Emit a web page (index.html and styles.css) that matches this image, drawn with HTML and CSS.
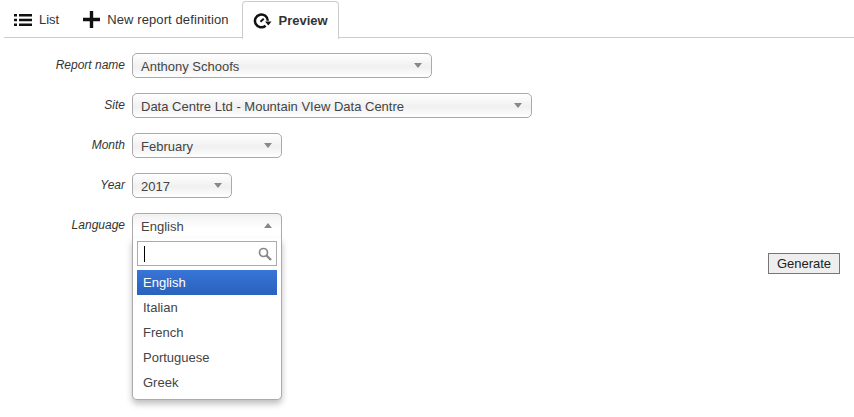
FILE: index.html
```html
<!DOCTYPE html>
<html lang="en">
<head>
    <meta charset="UTF-8">
    <title>Report preview</title>
    <link rel="stylesheet" href="styles.css">
</head>
<body>
    <ul class="tabs">
        <li class="tab">
            <svg class="icon-list" width="18" height="12" viewBox="0 0 18 12"><path d="M0 0h3v2.500H0zM5 0h13v2.500H5zM0 4.750h3v2.500H0zM5 4.750h13v2.500H5zM0 9.500h3V12H0zM5 9.500h13V12H5z" fill="#111"/></svg>
            List
        </li>
        <li class="tab">
            <svg class="icon-plus" width="17" height="17" viewBox="0 0 17 17"><path d="M6.800 0h3.400v6.800H17v3.400h-6.800V17H6.800v-6.800H0V6.800h6.800z" fill="#111"/></svg>
            New report definition
        </li>
        <li class="tab tab-active">
            <svg class="icon-preview" width="19" height="16" viewBox="0 0 19 16"><path d="M12.600 12.700A6.400 6.400 0 1 1 14.800 7.800" fill="none" stroke="#111" stroke-width="2.500"/><path d="M7.400 8.800l3.400-3" fill="none" stroke="#111" stroke-width="2"/><path d="M12 8.500h6.500l-3.200 4z" fill="#111"/></svg>
            Preview
        </li>
    </ul>

    <div class="content">
        <form class="form">
            <div class="row">
                <label class="label">Report name</label>
                <div class="select w300">Anthony Schoofs<span class="arrow"></span></div>
            </div>
            <div class="row">
                <label class="label">Site</label>
                <div class="select w400">Data Centre Ltd - Mountain VIew Data Centre<span class="arrow"></span></div>
            </div>
            <div class="row">
                <label class="label">Month</label>
                <div class="select w150">February<span class="arrow"></span></div>
            </div>
            <div class="row">
                <label class="label">Year</label>
                <div class="select w100">2017<span class="arrow"></span></div>
            </div>
            <div class="row">
                <label class="label">Language</label>
                <div class="select select-open w150">
                    English<span class="arrow arrow-up"></span>
                    <div class="dropdown">
                        <div class="search">
                            <span class="caret"></span>
                            <svg width="14" height="14" viewBox="0 0 14 14"><circle cx="5.500" cy="5.500" r="4" fill="none" stroke="#888" stroke-width="1.700"/><path d="M8.500 8.500l4.500 4.500" stroke="#888" stroke-width="2.400"/></svg>
                        </div>
                        <ul class="options">
                            <li class="option option-active">English</li>
                            <li class="option">Italian</li>
                            <li class="option">French</li>
                            <li class="option">Portuguese</li>
                            <li class="option">Greek</li>
                        </ul>
                    </div>
                </div>
            </div>
        </form>
        <button class="generate" type="button">Generate</button>
    </div>
</body>
</html>
```

FILE: styles.css
```css
* {
    box-sizing: border-box;
}

body {
    margin: 0;
    height: 417px;
    overflow: hidden;
    background: #fff;
    color: #444;
    font-family: "Liberation Sans", Arial, sans-serif;
    font-size: 13px;
}

.tabs {
    display: flex;
    list-style: none;
    height: 38px;
    margin: 0 0 0 4px;
    padding: 1px 0 0;
    border-bottom: 1px solid #ccc;
}

.tab {
    display: flex;
    align-items: center;
    height: 37px;
    padding: 0 23px 0 10px;
    color: #333;
    font-size: 13px;
}

.tab:first-child {
    padding-right: 24px;
}

.tab:nth-child(2) {
    padding: 0 13px 0 0;
    letter-spacing: 0.1px;
}

.tab svg {
    margin-right: 7px;
}

.tab-active {
    height: 38px;
    padding: 0 10px 0 10px;
    background: #fff;
    border: 1px solid #ccc;
    border-bottom: none;
    border-radius: 4px 4px 0 0;
    font-weight: bold;
}

.content {
    display: flex;
    justify-content: space-between;
    align-items: flex-start;
    padding: 15px 14px 0 0;
}

.form {
    display: flex;
    flex-direction: column;
    gap: 15px;
}

.row {
    display: flex;
    align-items: flex-start;
}

.label {
    width: 125px;
    margin-right: 7px;
    padding-top: 5px;
    color: #333;
    font-size: 12px;
    font-style: italic;
    text-align: right;
}

.select {
    position: relative;
    height: 25px;
    padding: 5px 8px 0;
    border: 1px solid #aaa;
    border-radius: 5px;
    background: linear-gradient(to bottom, #fff 0%, #f0f0f0 55%, #fff 100%);
    line-height: 16px;
    color: #444;
}

.w100 { width: 100px; }
.w150 { width: 150px; }
.w300 { width: 300px; }
.w400 { width: 400px; }

.arrow {
    position: absolute;
    top: 9px;
    right: 9px;
    border-left: 4px solid transparent;
    border-right: 4px solid transparent;
    border-top: 5px solid #888;
}

.arrow-up {
    border-top: none;
    border-bottom: 5px solid #888;
}

.select-open {
    border-radius: 5px 5px 0 0;
    border-bottom: none;
    background: linear-gradient(to bottom, #f1f1f1 0%, #fff 60%);
}

.dropdown {
    position: absolute;
    top: 24px;
    left: -1px;
    width: 150px;
    height: 162px;
    padding: 3px 4px 0;
    background: #fff;
    border: 1px solid #aaa;
    border-top: none;
    border-radius: 0 0 5px 5px;
    box-shadow: 0 4px 6px rgba(0, 0, 0, 0.25);
}

.search {
    display: flex;
    align-items: center;
    justify-content: space-between;
    height: 25px;
    padding: 0 4px 0 6px;
    border: 1px solid #aaa;
}

.caret {
    width: 1px;
    height: 16px;
    background: #000;
}

.options {
    list-style: none;
    margin: 4px 0 0;
    padding: 0;
}

.option {
    height: 25px;
    padding: 0 6px;
    line-height: 25px;
    color: #444;
}

.option-active {
    background: linear-gradient(to bottom, #3875d7 0%, #2a62bc 100%);
    color: #fff;
}

.generate {
    width: 72px;
    height: 21px;
    margin-top: 200px;
    padding: 0;
    border: 1px solid #767676;
    background: #eee;
    color: #222;
    font-family: "Liberation Sans", Arial, sans-serif;
    font-size: 13px;
}
```
